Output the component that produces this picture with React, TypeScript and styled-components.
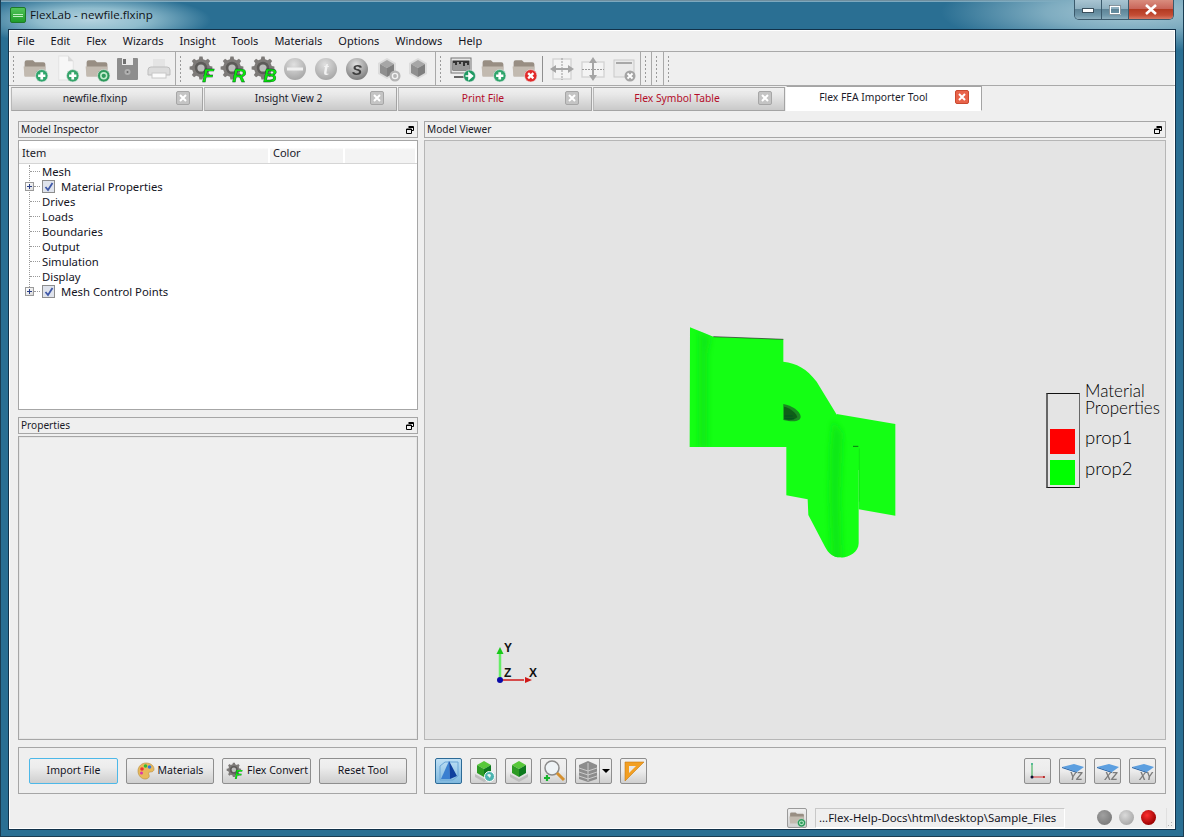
import React from "react";
import styled, { createGlobalStyle } from "styled-components";

const Global = createGlobalStyle`
  html, body { margin: 0; padding: 0; width: 1184px; height: 837px; overflow: hidden; background: #2a6f93; }
  #root { width: 1184px; height: 837px; }
  * { box-sizing: border-box; }
`;

const UI_FONT = `"Noto Sans", "Open Sans", "DejaVu Sans", sans-serif`;

const Frame = styled.div`
  width: 1184px; height: 837px; display: flex; flex-direction: column;
  padding: 0 7px 6px;
  font: 10.5px/15px ${UI_FONT}; color: #111;
  background:
    radial-gradient(ellipse 120px 26px at 90px 20px, #b4d2df 0%, #8fbccd 45%, rgba(42,111,147,0) 100%),
    radial-gradient(ellipse 190px 40px at 1130px 12px, #a7c9d6 0%, #7eacc0 45%, rgba(42,111,147,0) 100%),
    linear-gradient(180deg, #0f3a52 0, #cfe2ea 1px, #2a6f93 2px, #2a6f93 100%);
  position: relative;
  border-left: 1px solid #1b3d52; border-right: 1px solid #1b3d52; border-bottom: 1px solid #1b3d52;
`;
const TitleBar = styled.div`
  height: 29px; flex: none; display: flex; align-items: center; gap: 4px; padding: 1px 0 0 2px;
`;
const TitleText = styled.span`
  font: 11.6px/16px "Open Sans", "Noto Sans", sans-serif; color: #101418;
`;
const AppIcon = styled.div`
  width: 16px; height: 16px; border-radius: 2px; background: linear-gradient(#52c45a, #1f9c2a);
  border: 1px solid #1d7a26; display: flex; flex-direction: column; justify-content: center; align-items: center; gap: 1px;
  &::before, &::after { content: ""; width: 10px; height: 1px; background: #bfeec3; }
`;
const Controls = styled.div`
  position: absolute; top: 0; right: 9px; height: 20px; width: 100px; display: flex;
  border: 1px solid #3b5a6c; border-top: none; border-radius: 0 0 5px 5px; overflow: hidden;
`;
const CtrlBtn = styled.div<{ $close?: boolean; $w: number }>`
  width: ${p => p.$w}px; display: flex; align-items: center; justify-content: center;
  border-right: 1px solid #3b5a6c;
  background: ${p => p.$close
    ? "linear-gradient(180deg,#d98d7e 0,#c9665a 45%,#b33a22 50%,#c44d35 80%,#d77a66 100%)"
    : "linear-gradient(180deg,#a9c5d2 0,#8fb0c0 45%,#5e8497 50%,#6f97a9 80%,#8eb0bf 100%)"};
  &:last-child { border-right: none; }
`;
const CtrlSvg = styled.svg` display: block; `;

const Client = styled.div`
  flex: 1; display: flex; flex-direction: column; min-height: 0; background: #efefef;
  border: 1px solid #12324a; box-shadow: inset 0 0 0 1px #fff;
`;
const MenuBar = styled.div`
  height: 22px; flex: none; display: flex; align-items: center; padding: 0 0 0 8px; gap: 16px;
  border-bottom: 1px solid #a9a9a9;
`;
const MenuItem = styled.span` font-size: 11px; color: #14141e; `;
const ToolBar = styled.div`
  height: 34px; flex: none; display: flex; border-bottom: 1px solid #a9a9a9;
`;
const ToolSection = styled.div<{ $w: number; $last?: boolean }>`
  width: ${p => p.$w}px; flex: none; height: 100%; display: flex; align-items: center;
  border-right: ${p => (p.$last ? "none" : "1px solid #a9a9a9")}; padding-left: 2px;
`;
const Grip = styled.div`
  width: 3px; height: 27px; flex: none; margin: 0 4px 0 1px;
  background-image: radial-gradient(circle, #9a9a9a 0.9px, transparent 1px);
  background-size: 3px 4px;
`;
const ToolBtn = styled.div`
  width: 31px; height: 31px; flex: none; display: flex; align-items: center; justify-content: center;
`;
const ToolDivider = styled.div`
  width: 1px; height: 26px; background: #8f8f8f; margin: 0 3px; flex: none;
`;
const Ico = styled.svg<{ $blur?: number }>`
  display: block; flex: none; overflow: visible; filter: blur(${p => p.$blur ?? 0.4}px);
`;

const TabBar = styled.div`
  height: 25px; flex: none; display: flex; padding: 1px 0 0 2px; gap: 1px; align-items: stretch;
`;
const Tab = styled.div<{ $w: number; $active?: boolean; $red?: boolean }>`
  width: ${p => p.$w}px; flex: none; display: flex; align-items: center; justify-content: center;
  position: relative; padding: 0 ${p => (p.$active ? 21 : 24)}px 2px 0; font-size: 10.3px;
  border: 1px solid #a4a4a4; border-left-color: #b8b8b8;
  color: ${p => (p.$red ? "#b40d2a" : "#1a1a2a")};
  background: ${p => (p.$active ? "#fff" : "linear-gradient(180deg,#f0f0f0 0,#e8e8e8 30%,#c9c9c9 100%)")};
  border-bottom: ${p => (p.$active ? "1px solid #fff" : "1px solid #a4a4a4")};
  ${p => p.$active ? "border-top: 1px solid #a4a4a4; margin-top:-1px; border-left-color:#fff;" : ""}
`;
const TabClose = styled.span<{ $active?: boolean }>`
  position: absolute; right: 12px; top: 3px; width: 14px; height: 14px; border-radius: 2px;
  background: ${p => (p.$active ? "#e8634a" : "#c4c4c4")}; border: 1px solid ${p => (p.$active ? "#c9492f" : "#a6a6a6")};
  display: flex; align-items: center; justify-content: center;
`;

const Body = styled.div`
  flex: none; height: 683px; display: grid; grid-template-columns: 400px 742px; grid-template-rows: minmax(0, 1fr); column-gap: 6px;
  padding: 10px 0 0 9px;
`;
const Column = styled.div` display: flex; flex-direction: column; min-height: 0; `;
const DockHeader = styled.div`
  height: 17px; flex: none; border: 1px solid #a6a6a6; display: flex; align-items: center;
  justify-content: space-between; padding: 0 3px 0 2px; font-size: 10.1px; color: #1a1a28;
`;
const TreeBox = styled.div`
  height: 270px; margin-top: 2px; margin-bottom: 7px; flex: none; background: #fff;
  border: 1px solid #a6a6a6;
`;
const TreeHead = styled.div`
  height: 23px; display: flex; font-size: 11px;
  background: linear-gradient(180deg,#fff 0,#fff 30%,#f3f3f3 40%,#f3f3f3 100%);
  border-bottom: 1px solid #d5d5d5;
`;
const HeadCell = styled.div<{ $w?: number }>`
  ${p => (p.$w ? `width:${p.$w}px;flex:none;` : "flex:1;")}
  padding: 4px 0 0 3px; border-right: 2px solid #fff; color: #1a1a28;
`;
const TreeRows = styled.div` position: relative; `;
const Guide = styled.div`
  position: absolute; left: 10px; top: 1px; height: 128px;
  border-left: 1px dotted #9a9a9a;
`;
const TreeRow = styled.div`
  height: 15px; display: flex; align-items: center; padding-left: 5px; font-size: 11.3px; color: #14141e;
  position: relative;
`;
const Branch = styled.div`
  width: 10px; height: 0; border-top: 1px dotted #9a9a9a; margin-left: 6px; margin-right: 2px; flex: none;
`;
const Expander = styled.div`
  width: 9px; height: 9px; background: linear-gradient(135deg,#fff,#dcdcdc); border: 1px solid #9a9a9a; flex: none;
  position: relative; margin-left: 1px;
  &::before { content: ""; position: absolute; left: 1px; top: 3px; width: 5px; height: 1px; background: #2b3f86; }
  &::after { content: ""; position: absolute; left: 3px; top: 1px; width: 1px; height: 5px; background: #2b3f86; }
`;
const ShortBranch = styled.div`
  width: 6px; border-top: 1px dotted #9a9a9a; flex: none; margin-right: 2px;
`;
const Check = styled.div`
  width: 13px; height: 13px; flex: none; border: 1px solid #8d8d8d; background: #dfe3ec; margin-right: 6px;
  display: flex; align-items: center; justify-content: center;
`;
const PropsBody = styled.div`
  flex: 1; min-height: 0; margin-top: 2px; border: 1px solid #a6a6a6; background: #efefef; box-shadow: inset 0 0 0 1px #e6e6e6;
`;
const ButtonPanel = styled.div`
  height: 47px; flex: none; margin-top: 7px; border: 1px solid #a6a6a6; display: flex; align-items: center;
`;
const LeftBtns = styled(ButtonPanel)` padding: 0 0 0 10px; gap: 8px; width: 399px; `;
const RightBtns = styled(ButtonPanel)` padding: 0 9px 0 10px; justify-content: space-between; `;
const Group = styled.div` display: flex; gap: 8px; align-items: center; `;
const PushBtn = styled.div<{ $focus?: boolean; $w: number }>`
  width: ${p => p.$w}px; height: 26px; flex: none; border-radius: 2px; display: flex; align-items: center; justify-content: center; gap: 3px;
  font-size: 10.5px; color: #14141e; white-space: nowrap;
  border: 1px solid ${p => (p.$focus ? "#4db8e8" : "#8e8e8e")};
  background: linear-gradient(180deg,#f0f0f0 0,#ececec 35%,#cfcfcf 100%);
`;
const IconBtn = styled.div<{ $on?: boolean; $w?: number }>`
  width: ${p => p.$w ?? 27}px; height: 26px; flex: none; border-radius: 2px; display: flex; align-items: center; justify-content: center;
  border: 1px solid ${p => (p.$on ? "#2c6a96" : "#8e8e8e")};
  background: ${p => (p.$on ? "linear-gradient(180deg,#bfe0f5,#7fb8de)" : "linear-gradient(180deg,#f0f0f0 0,#ececec 50%,#cfcfcf 100%)")};
`;
const SplitArrow = styled.div`
  width: 12px; height: 100%; flex: none; border-left: 1px solid #9c9c9c; display: flex; align-items: center; justify-content: center;
  &::after { content: ""; border-left: 4px solid transparent; border-right: 4px solid transparent; border-top: 4px solid #000; }
`;
const SplitMain = styled.div` flex: 1; display: flex; align-items: center; justify-content: center; `;

const Viewer = styled.div`
  height: 600px; margin-top: 2px; flex: none; position: relative; background: #e4e4e4;
  border: 1px solid #b6b6b6;
`;
const ModelSvg = styled.svg` position: absolute; left: 245px; top: 169px; `;
const AxesSvg = styled.svg` position: absolute; left: 55px; top: 489px; `;
const Legend = styled.div`
  position: absolute; left: 621px; top: 252px; display: flex; gap: 5px;
  font: 300 17px/17px Lato, "Open Sans", sans-serif; color: #000;
`;
const LegendBox = styled.div`
  width: 34px; height: 95px; display: flex; flex-direction: column; justify-content: flex-end; gap: 6px;
  border-top: 1px solid #111; border-bottom: 1px solid #111;
  border-left: 2px solid #666; border-right: 1px solid #666; padding: 0 0 2px 2px;
`;
const Swatch = styled.div<{ $c: string }>` width: 25px; height: 25px; background: ${p => p.$c}; `;
const LegendLabels = styled.div` display: flex; flex-direction: column; margin-top: -11px; `;
const LegendHead = styled.div` margin-bottom: 8px; font-size: 17px; line-height: 17px; `;
const LegendItem = styled.div` height: 31px; font-size: 18.5px; line-height: 26px; `;

const StatusBar = styled.div`
  flex: 1; min-height: 0; display: flex; align-items: center; padding: 12px 0 0 778px; position: relative;
`;
const StatusBtn = styled.div`
  width: 20px; height: 20px; flex: none; border: 1px solid #9a9a9a; border-radius: 2px; display: flex; align-items: center; justify-content: center;
  background: linear-gradient(#f0f0f0,#d0d0d0); margin-right: 8px;
`;
const PathField = styled.div`
  width: 250px; height: 20px; flex: none; border: 1px solid #fff; border-left-color: #c8c8c8; border-top-color: #c8c8c8;
  padding-left: 3px; line-height: 18px; font-size: 11.4px; color: #14141e; white-space: nowrap; overflow: hidden;
`;
const Led = styled.div<{ $c: string; $h: string }>`
  width: 15px; height: 15px; border-radius: 50%; flex: none;
  background: radial-gradient(circle at 40% 35%, ${p => p.$h} 0%, ${p => p.$c} 75%);
`;
const Leds = styled.div`
  display: flex; gap: 7px; margin-left: 32px; padding-right: 4px; border-right: 1px solid #e0e0e0; height: 20px; align-items: center; width: 70px;
`;
const SizeGrip = styled.div`
  position: absolute; right: 1px; bottom: 1px; width: 10px; height: 10px;
  background-image: radial-gradient(circle, #b0b0b0 0.8px, transparent 1px); background-size: 3px 3px;
  clip-path: polygon(100% 0, 100% 100%, 0 100%);
`;

/* --- icons --- */
const gearPath = (cx: number, cy: number, r1: number, r2: number, n: number) => {
  let d = "";
  for (let i = 0; i < n; i++) {
    const a = (i / n) * Math.PI * 2;
    const s = Math.PI / n / 2;
    const pts = [[r1, a - s * 1.2], [r2, a - s * 0.7], [r2, a + s * 0.7], [r1, a + s * 1.2]];
    pts.forEach(([r, t], j) => {
      d += `${i === 0 && j === 0 ? "M" : "L"}${(cx + r * Math.cos(t)).toFixed(2)} ${(cy + r * Math.sin(t)).toFixed(2)} `;
    });
  }
  return d + "Z";
};

const Badge = ({ c, kind }: { c: string; kind: "plus" | "x" | "refresh" | "arrow" }) => (
  <g>
    <circle cx="19.5" cy="20" r="6" fill={c} stroke="#e8e8e8" strokeWidth=".6" />
    {kind === "plus" && <path d="M19.5 16.5v7M16 20h7" stroke="#fff" strokeWidth="2.6" />}
    {kind === "x" && <path d="M17 17.5l5 5M22 17.5l-5 5" stroke="#fff" strokeWidth="2.2" />}
    {kind === "refresh" && <circle cx="19.5" cy="20" r="2.8" fill="none" stroke="#bfeccc" strokeWidth="1.5" />}
    {kind === "arrow" && <path d="M15.5 20h5M19 17l3.5 3-3.5 3z" stroke="#fff" strokeWidth="1.6" fill="#fff" />}
  </g>
);
const FolderShape = ({ a = "#c2bab0", b = "#988e83" }: { a?: string; b?: string }) => (
  <g>
    <path d="M3 7q0-2 2-2h6l2 2h8q2 0 2 2v11H3z" fill={b} />
    <path d="M2 11h21l-1 10H3z" fill={a} />
  </g>
);
const Folder = ({ badge, c }: { badge: "plus" | "x" | "refresh"; c: string }) => (
  <Ico width="28" height="27" viewBox="0 0 26 26"><FolderShape /><Badge c={c} kind={badge} /></Ico>
);
const Doc = () => (
  <Ico width="28" height="27" viewBox="0 0 26 26">
    <path d="M6 1h9l5 5v18H6z" fill="#f7f7f7" stroke="#e2e2e2" />
    <path d="M15 1v5h5z" fill="#d8d8d8" />
    <Badge c="#35a46a" kind="plus" />
  </Ico>
);
const Floppy = () => (
  <Ico width="26" height="26" viewBox="0 0 26 26">
    <rect x="2" y="2" width="21" height="22" rx="1" fill="#8d8d8d" />
    <rect x="7" y="2" width="11" height="7" fill="#ececec" /><rect x="8" y="3" width="3" height="5" fill="#707070" />
    <circle cx="12.5" cy="16" r="3" fill="#b0b0b0" /><circle cx="12.5" cy="16" r="1" fill="#666" />
  </Ico>
);
const Printer = () => (
  <Ico width="26" height="26" viewBox="0 0 26 26">
    <rect x="7" y="3" width="12" height="10" fill="#e4e4e4" />
    <path d="M2 14q0-3 3-3h16q3 0 3 3v5H2z" fill="#dcdcdc" stroke="#bdbdbd" />
    <rect x="6" y="17" width="14" height="5" fill="#fbfbfb" stroke="#c8c8c8" />
  </Ico>
);
const Gear = ({ l, size = 30 }: { l: string; size?: number }) => (
  <Ico width={size} height={size} viewBox="0 0 30 30" $blur={0.25}>
    <path d={gearPath(14, 14, 9, 11.5, 8)} fill="#7d7a78" />
    <circle cx="14" cy="14" r="6.2" fill="#5d5b59" />
    <circle cx="14" cy="14" r="3.6" fill="#bdbdbd" />
    <text x="21" y="28" textAnchor="middle" fontFamily='"Liberation Sans", sans-serif' fontWeight="700" fontStyle="italic" fontSize="19" fill="#0ae60a" stroke="#032" strokeWidth="0.35">{l}</text>
  </Ico>
);
const Orb = ({ sym }: { sym: "-" | "t" | "s" }) => (
  <Ico width="24" height="24" viewBox="0 0 24 24">
    <defs><radialGradient id={`o${sym}`} cx="45%" cy="30%" r="75%"><stop offset="0" stopColor="#e0e0e0" /><stop offset="1" stopColor={sym === "s" ? "#767676" : "#a2a2a2"} /></radialGradient></defs>
    <circle cx="12" cy="12" r="11" fill={`url(#o${sym})`} />
    {sym === "-" && <rect x="4" y="10.5" width="16" height="3" fill="#f0f0f0" />}
    {sym === "t" && <text x="12" y="18" textAnchor="middle" fontFamily='"Liberation Serif", serif' fontStyle="italic" fontWeight="700" fontSize="18" fill="#f2f2f2">t</text>}
    {sym === "s" && <text x="12" y="17.5" textAnchor="middle" fontFamily='"Liberation Sans", sans-serif' fontStyle="italic" fontWeight="700" fontSize="15" fill="#3e3e3e">S</text>}
  </Ico>
);
const Cube = ({ badge }: { badge?: boolean }) => (
  <Ico width="26" height="26" viewBox="0 0 26 26">
    <path d="M12 2l9 5v11l-9 5-9-5V7z" fill="#dcdcdc" />
    <path d="M12 4l7 4-7 4-7-4z" fill="#a6a6a6" />
    <path d="M5 8l7 4v9l-7-4z" fill="#8f8f8f" /><path d="M19 8l-7 4v9l7-4z" fill="#7f7f7f" />
    {badge && <g><circle cx="20" cy="20" r="5.5" fill="#b5b5b5" /><circle cx="20" cy="20" r="2.6" fill="none" stroke="#f2f2f2" strokeWidth="1.4" /></g>}
  </Ico>
);
const Monitor = () => (
  <Ico width="28" height="26" viewBox="0 0 28 26" $blur={0.2}>
    <rect x="3" y="2" width="20" height="15" fill="#e8e8e8" stroke="#777" />
    <rect x="4.5" y="4.5" width="17" height="10" fill="#333" />
    <path d="M6 14V7M8 14V9M10 14V6M12 14V8M14 14V6M16 14V10M18 14V7M20 14V9" stroke="#fff" strokeWidth="1" />
    <path d="M6 21h14" stroke="#666" strokeWidth="2" />
    <g transform="translate(2,0)"><Badge c="#1f9a63" kind="arrow" /></g>
  </Ico>
);
const HSplit = () => (
  <Ico width="26" height="26" viewBox="0 0 26 26">
    <rect x="4" y="3" width="18" height="20" fill="#f4f4f4" stroke="#d5d5d5" strokeWidth="1.4" />
    <path d="M13 2v22" stroke="#9a9a9a" strokeDasharray="2 1" />
    <path d="M1 13l6-4v3h12V9l6 4-6 4v-3H7v3z" fill="#a5a5a5" />
  </Ico>
);
const VSplit = () => (
  <Ico width="26" height="26" viewBox="0 0 26 26">
    <rect x="2" y="6" width="22" height="15" fill="#f4f4f4" stroke="#d5d5d5" strokeWidth="1.4" />
    <path d="M2 13.5h22" stroke="#9a9a9a" strokeDasharray="2 1" />
    <path d="M13 1l4 6h-3v12h3l-4 6-4-6h3V7H9z" fill="#a5a5a5" />
  </Ico>
);
const WinClose = () => (
  <Ico width="26" height="26" viewBox="0 0 26 26">
    <rect x="3" y="4" width="20" height="17" fill="#eaeaea" stroke="#c9c9c9" />
    <rect x="5" y="6" width="16" height="2" fill="#a8a8a8" />
    <circle cx="19" cy="20" r="5.5" fill="#a4a4a4" />
    <path d="M16.5 17.5l5 5M21.5 17.5l-5 5" stroke="#fff" strokeWidth="1.8" />
  </Ico>
);
const SmallX = () => (
  <svg width="8" height="8" viewBox="0 0 8 8"><path d="M1 1l6 6M7 1l-6 6" stroke="#fff" strokeWidth="2" /></svg>
);
const Float = () => (
  <svg width="8" height="8" viewBox="0 0 8 8" style={{ display: "block" }}>
    <path d="M2.5.5h5v4h-2M.5 3h5v4.500h-5zM.5 3.500h5M2.500 1.500h5" fill="none" stroke="#000" />
  </svg>
);
const Tick = () => (
  <svg width="10" height="10" viewBox="0 0 10 10"><path d="M1.500 5l2.500 3 4.500-7" fill="none" stroke="#3f58a8" strokeWidth="1.800" /></svg>
);
const Palette = () => (
  <Ico width="18" height="18" viewBox="0 0 18 18" $blur={0.15}>
    <path d="M9 1c5 0 8 3 8 6 0 3-3 3-4 3s-2 1-1 3-1 4-4 4-7-3-7-8 4-8 8-8z" fill="#e8b95a" stroke="#b78a3a" strokeWidth=".6" />
    <circle cx="5" cy="7" r="1.800" fill="#e33" /><circle cx="8.500" cy="4" r="1.800" fill="#3b3" /><circle cx="12.500" cy="5" r="1.800" fill="#37d" /><circle cx="4.500" cy="11" r="1.500" fill="#d3a" />
  </Ico>
);
const PerspIcon = () => (
  <Ico width="22" height="22" viewBox="0 0 22 22" $blur={0.25}>
    <path d="M2 6l5-4h13v14l-5 4H2z" fill="none" stroke="#6aa6d6" />
    <path d="M11 1L3 19h9z" fill="#3a7fd0" /><path d="M11 1l8 15-7 3z" fill="#0f3f9e" />
  </Ico>
);
const GreenCube = ({ globe }: { globe?: boolean }) => (
  <Ico width="24" height="24" viewBox="0 0 24 24" $blur={0.25}>
    <path d="M3 15l9 5 9-5v3l-9 5-9-5z" fill="#bdbdbd" />
    <path d="M12 2l7 4-7 4-7-4z" fill="#58c83a" /><path d="M5 6l7 4v8l-7-4z" fill="#2d9b24" /><path d="M19 6l-7 4v8l7-4z" fill="#0d7a1e" />
    {globe && <g><circle cx="17.500" cy="17.500" r="5" fill="#4bb4b0" stroke="#fff" /><path d="M15 16q2-2 4 0l-1 3z" fill="#e8f6f0" /></g>}
  </Ico>
);
const Magnify = () => (
  <Ico width="24" height="24" viewBox="0 0 24 24" $blur={0.2}>
    <circle cx="10" cy="9" r="7" fill="#eef3f6" stroke="#8a8a8a" strokeWidth="1.500" />
    <path d="M15 14l7 7" stroke="#d5902e" strokeWidth="3" />
    <path d="M5 16v6M2 19h6" stroke="#17b32c" strokeWidth="2.200" />
  </Ico>
);
const Stack = () => (
  <Ico width="22" height="24" viewBox="0 0 22 24" $blur={0.35}>
    <path d="M11 2l9 4v14l-9 3-9-3V6z" fill="#8c8c8c" />
    <path d="M2 9l9 3 9-3M2 13l9 3 9-3M2 17l9 3 9-3M11 4v18" stroke="#d0d0d0" strokeWidth=".9" fill="none" />
  </Ico>
);
const Ruler = () => (
  <Ico width="22" height="22" viewBox="0 0 22 22" $blur={0.2}>
    <path d="M2 2h19L2 21z" fill="#f29f22" stroke="#c67a10" strokeWidth=".6" /><path d="M6 6h7l-7 7z" fill="#e8e8e8" />
  </Ico>
);
const TriadIcon = () => (
  <Ico width="20" height="20" viewBox="0 0 20 20" $blur={0.15}>
    <path d="M4 16V4" stroke="#2caa4b" /><path d="M4 16h12" stroke="#d33" /><circle cx="4" cy="16" r="1.500" fill="#113" />
    <circle cx="16" cy="16" r="1" fill="#a11" /><circle cx="4" cy="3" r="1" fill="#2a7" />
  </Ico>
);
const PlaneIcon = ({ l }: { l: string }) => (
  <Ico width="24" height="20" viewBox="0 0 24 20" $blur={0.2}>
    <path d="M1 6l12-3 10 3-7 5z" fill="#5c9fe0" /><path d="M1 6l15 5v1L1 7z" fill="#1f5fa8" />
    <text x="15" y="19" textAnchor="middle" fontFamily='"Liberation Sans", sans-serif' fontStyle="italic" fontWeight="700" fontSize="10" fill="#7c7c7c">{l}</text>
  </Ico>
);

const OUTLINE = "M60 52L130 80L340 88V155C380 160 410 175 440 215L525 355L530 390L566 420V700C566 730 530 745 510 742C490 742 475 730 465 710L415 615L413 568L349 556V411H59Z";
const Model = () => (
  <ModelSvg width="240" height="260" viewBox="0 0 720 780">
    <defs>
      <clipPath id="bodyClip"><path d={OUTLINE} /></clipPath>
      <filter id="soft" x="-50%" y="-50%" width="200%" height="200%"><feGaussianBlur stdDeviation="9" /></filter>
    </defs>
    <path d="M500 312L676 342V617L566 598V480H500Z" fill="#14ff14" />
    <path d={OUTLINE} fill="#14ff14" />
    <g clipPath="url(#bodyClip)">
      <path d="M88 60L122 85L112 130V415H88Z" fill="#10e814" filter="url(#soft)" />
      <path d="M488 330L518 370L516 420L510 560L516 760H486L478 560L480 420Z" fill="#10e814" filter="url(#soft)" />
    </g>
    <path d="M130 80L340 88" stroke="#222" strokeWidth="2" />
    <path d="M340 282C365 285 392 305 392 320C392 332 375 338 340 330Z" fill="#1a8a22" />
    <path d="M342 290C360 293 380 310 382 322C370 332 355 332 342 328Z" fill="#0f5f18" />
    <path d="M344 318H368M344 326H372" stroke="#052" strokeWidth="3" />
    <path d="M549 409H565" stroke="#0a7a12" strokeWidth="3" />
    <path d="M568 415V575" stroke="#10d014" strokeWidth="1.500" />
  </ModelSvg>
);

const Axes = () => (
  <AxesSvg width="70" height="60" viewBox="0 0 70 60">
    <path d="M20 50V24" stroke="#66ee66" strokeWidth="2.500" />
    <path d="M20 17l3.500 7h-7z" fill="#18c818" />
    <path d="M20 50h24" stroke="#d01818" strokeWidth="1.500" />
    <path d="M52 50l-7-3v6z" fill="#d01818" />
    <circle cx="20" cy="50" r="3" fill="#0a0aa8" />
    <g fontFamily='"Liberation Sans", sans-serif' fontWeight="700" fontSize="12" fill="#111">
      <text x="24" y="22">Y</text><text x="24" y="47">Z</text><text x="49" y="47">X</text>
    </g>
  </AxesSvg>
);

const menus = ["File", "Edit", "Flex", "Wizards", "Insight", "Tools", "Materials", "Options", "Windows", "Help"];
const tabs = [
  { t: "newfile.flxinp", w: 192 },
  { t: "Insight View 2", w: 193 },
  { t: "Print File", w: 194, red: true },
  { t: "Flex Symbol Table", w: 192, red: true },
  { t: "Flex FEA Importer Tool", w: 196, active: true },
];
const plain = ["Drives", "Loads", "Boundaries", "Output", "Simulation", "Display"];

export default function App() {
  return (
    <Frame>
      <Global />
      <TitleBar>
        <AppIcon />
        <TitleText>FlexLab - newfile.flxinp</TitleText>
      </TitleBar>
      <Controls>
        <CtrlBtn $w={28}><CtrlSvg width="12" height="6" viewBox="0 0 12 6"><rect x="0.500" y="1.500" width="11" height="4" fill="#fff" stroke="#3a4f5c" /></CtrlSvg></CtrlBtn>
        <CtrlBtn $w={27}><CtrlSvg width="12" height="10" viewBox="0 0 12 10"><rect x="1" y="1" width="10" height="8" fill="none" stroke="#fff" strokeWidth="2" /><rect x="0.500" y="0.500" width="11" height="9" fill="none" stroke="#3a4f5c" strokeWidth=".6" /></CtrlSvg></CtrlBtn>
        <CtrlBtn $w={45} $close><CtrlSvg width="14" height="11" viewBox="0 0 14 11"><path d="M2 1l10 9M12 1L2 10" stroke="#fff" strokeWidth="2.600" /></CtrlSvg></CtrlBtn>
      </Controls>
      <Client>
        <MenuBar>{menus.map(m => <MenuItem key={m}>{m}</MenuItem>)}</MenuBar>
        <ToolBar>
          <ToolSection $w={167}>
            <Grip />
            <ToolBtn><Folder badge="plus" c="#2fa56c" /></ToolBtn>
            <ToolBtn><Doc /></ToolBtn>
            <ToolBtn><Folder badge="refresh" c="#2d9a5c" /></ToolBtn>
            <ToolBtn><Floppy /></ToolBtn>
            <ToolBtn><Printer /></ToolBtn>
          </ToolSection>
          <ToolSection $w={260}>
            <Grip />
            <ToolBtn><Gear l="F" /></ToolBtn>
            <ToolBtn><Gear l="R" /></ToolBtn>
            <ToolBtn><Gear l="B" /></ToolBtn>
            <ToolBtn><Orb sym="-" /></ToolBtn>
            <ToolBtn><Orb sym="t" /></ToolBtn>
            <ToolBtn><Orb sym="s" /></ToolBtn>
            <ToolBtn><Cube badge /></ToolBtn>
            <ToolBtn><Cube /></ToolBtn>
          </ToolSection>
          <ToolSection $w={205}>
            <Grip />
            <ToolBtn><Monitor /></ToolBtn>
            <ToolBtn><Folder badge="plus" c="#2fa56c" /></ToolBtn>
            <ToolBtn><Folder badge="x" c="#e22a2a" /></ToolBtn>
            <ToolDivider />
            <ToolBtn><HSplit /></ToolBtn>
            <ToolBtn><VSplit /></ToolBtn>
            <ToolBtn><WinClose /></ToolBtn>
          </ToolSection>
          <ToolSection $w={11}><Grip /></ToolSection>
          <ToolSection $w={12}><Grip /></ToolSection>
          <ToolSection $w={10} $last><Grip /></ToolSection>
        </ToolBar>
        <TabBar>
          {tabs.map(t => (
            <Tab key={t.t} $w={t.w} $active={t.active} $red={t.red}>
              {t.t}
              <TabClose $active={t.active}><SmallX /></TabClose>
            </Tab>
          ))}
        </TabBar>
        <Body>
          <Column>
            <DockHeader>Model Inspector<Float /></DockHeader>
            <TreeBox>
              <TreeHead>
                <HeadCell $w={251}>Item</HeadCell>
                <HeadCell $w={75}>Color</HeadCell>
                <HeadCell />
              </TreeHead>
              <TreeRows>
                <Guide />
                <TreeRow><Branch />Mesh</TreeRow>
                <TreeRow><Expander /><ShortBranch /><Check><Tick /></Check>Material Properties</TreeRow>
                {plain.map(p => <TreeRow key={p}><Branch />{p}</TreeRow>)}
                <TreeRow><Expander /><ShortBranch /><Check><Tick /></Check>Mesh Control Points</TreeRow>
              </TreeRows>
            </TreeBox>
            <DockHeader>Properties<Float /></DockHeader>
            <PropsBody />
            <LeftBtns>
              <PushBtn $w={89} $focus>Import File</PushBtn>
              <PushBtn $w={88}><Palette />Materials</PushBtn>
              <PushBtn $w={89}><Gear l="F" size={19} />Flex Convert</PushBtn>
              <PushBtn $w={88}>Reset Tool</PushBtn>
            </LeftBtns>
          </Column>
          <Column>
            <DockHeader>Model Viewer<Float /></DockHeader>
            <Viewer>
              <Model />
              <Axes />
              <Legend>
                <LegendBox>
                  <Swatch $c="#ff0000" />
                  <Swatch $c="#00ff00" />
                </LegendBox>
                <LegendLabels>
                  <LegendHead>Material<br />Properties</LegendHead>
                  <LegendItem>prop1</LegendItem>
                  <LegendItem>prop2</LegendItem>
                </LegendLabels>
              </Legend>
            </Viewer>
            <RightBtns>
              <Group>
                <IconBtn $on><PerspIcon /></IconBtn>
                <IconBtn><GreenCube globe /></IconBtn>
                <IconBtn><GreenCube /></IconBtn>
                <IconBtn><Magnify /></IconBtn>
                <IconBtn $w={37}><SplitMain><Stack /></SplitMain><SplitArrow /></IconBtn>
                <IconBtn><Ruler /></IconBtn>
              </Group>
              <Group>
                <IconBtn><TriadIcon /></IconBtn>
                <IconBtn><PlaneIcon l="YZ" /></IconBtn>
                <IconBtn><PlaneIcon l="XZ" /></IconBtn>
                <IconBtn><PlaneIcon l="XY" /></IconBtn>
              </Group>
            </RightBtns>
          </Column>
        </Body>
        <StatusBar>
          <StatusBtn><Ico width="18" height="18" viewBox="0 0 26 26"><FolderShape /><Badge c="#2d9a5c" kind="refresh" /></Ico></StatusBtn>
          <PathField>...Flex-Help-Docs\html\desktop\Sample_Files</PathField>
          <Leds>
            <Led $c="#7c7c7c" $h="#a0a0a0" />
            <Led $c="#a9a9a9" $h="#dadada" />
            <Led $c="#980000" $h="#ff3030" />
          </Leds>
          <SizeGrip />
        </StatusBar>
      </Client>
    </Frame>
  );
}
